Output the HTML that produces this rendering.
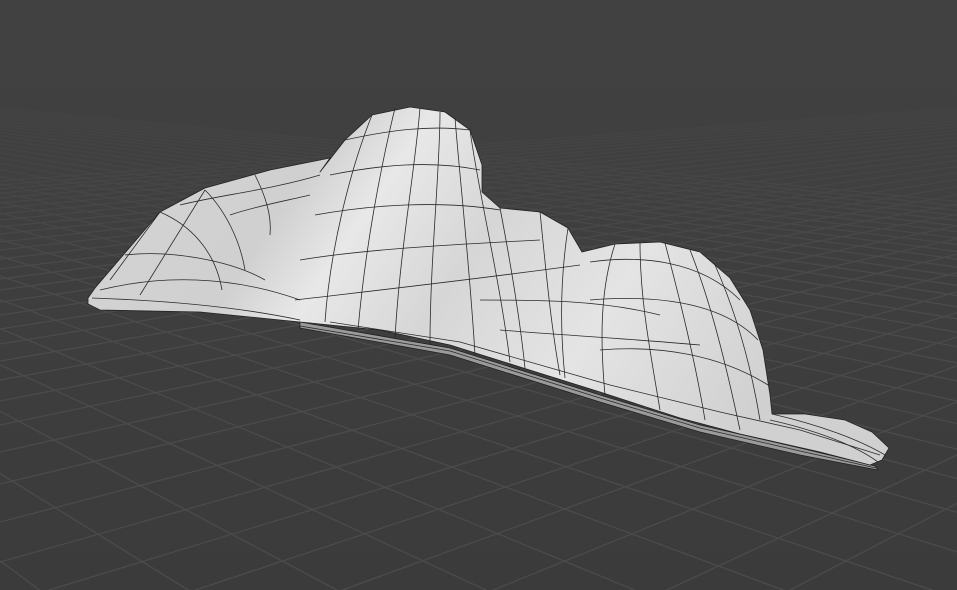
<!DOCTYPE html>
<html><head><meta charset="utf-8"><style>
html,body{margin:0;padding:0;background:#3d3d3d;overflow:hidden;width:957px;height:590px}
svg{display:block;position:absolute;left:0;top:0}
</style></head><body>
<svg width="957" height="590" viewBox="0 0 957 590" xmlns="http://www.w3.org/2000/svg">
<defs>
<linearGradient id="bg" x1="0" y1="0" x2="0" y2="1">
<stop offset="0" stop-color="#414141"/><stop offset="1" stop-color="#3b3b3b"/>
</linearGradient>
<linearGradient id="fade" x1="0" y1="0" x2="0" y2="1">
<stop offset="0" stop-color="#414141" stop-opacity="1"/>
<stop offset="0.1" stop-color="#414141" stop-opacity="1"/>
<stop offset="0.3" stop-color="#404040" stop-opacity="0.5"/>
<stop offset="0.5" stop-color="#404040" stop-opacity="0"/>
</linearGradient>
<linearGradient id="body" x1="0" y1="0" x2="1" y2="0.3">
<stop offset="0" stop-color="#d4d4d4"/><stop offset="0.3" stop-color="#d0d0d0"/><stop offset="0.4" stop-color="#e8e8e8"/>
<stop offset="0.55" stop-color="#d6d6d6"/><stop offset="0.75" stop-color="#e4e4e4"/><stop offset="1" stop-color="#d0d0d0"/>
</linearGradient>
</defs>
<rect width="957" height="590" fill="url(#bg)"/>
<g stroke="#4b4b4b" stroke-width="1.3" fill="none">
<path d="M-673,60L120,650M-668,60L285,650M-662,60L450,650M-657,60L615,650M-652,60L780,650M-646,60L945,650M-641,60L1110,650M-635,60L1275,650M-630,60L1440,650M-625,60L1605,650M-619,60L1770,650M-614,60L1935,650M-608,60L2100,650M-603,60L2265,650M-597,60L2430,650M-592,60L2595,650M-587,60L2760,650M-581,60L2925,650M-576,60L3090,650M-570,60L3255,650M-565,60L3420,650M-560,60L3585,650M-554,60L3750,650M-549,60L3915,650M-543,60L4080,650M-538,60L4245,650M-533,60L4410,650M-527,60L4575,650M-522,60L4740,650M-516,60L4905,650M-511,60L5070,650M-506,60L5235,650M-500,60L5400,650M-495,60L5565,650"/>
<path d="M0,790L1850,40M0,715L1850,40M0,655L1850,40M0,605L1850,40M0,562L1850,40M0,522L1850,40M0,484L1850,40M0,452L1850,40M0,425L1850,40M0,401L1850,40M0,380L1850,40M0,361L1850,40M0,344L1850,40M0,329L1850,40M0,315L1850,40M0,302L1850,40M0,290L1850,40M0,279L1850,40M0,269L1850,40M0,259L1850,40M0,250L1850,40M0,242L1850,40M0,234L1850,40M0,227L1850,40M0,220L1850,40M0,214L1850,40M0,208L1850,40M0,203L1850,40M0,198L1850,40M0,193L1850,40M0,189L1850,40M0,185L1850,40M0,181L1850,40M0,900L1850,40M0,1000L1850,40"/>
</g>
<rect width="957" height="590" fill="url(#fade)"/>
<g stroke="#222" stroke-width="0.8" stroke-linejoin="round">
<path d="M300,322 L450,348 L600,395 L700,425 L800,448 L875,466 L878,470 L800,455 L700,432 L600,402 L450,355 L300,328 Z" fill="#9a9a9a"/>
<path fill="url(#body)" d="M88,298 L95,288 L160,212 L205,188 L270,170 L330,158 L320,172 L345,140 L372,115 L410,107 L445,112 L470,130 L482,165 L482,192 L500,208 L540,212 L568,228 L582,252 L615,244 L660,242 L700,252 L730,278 L750,310 L763,350 L770,395 L772,414 L805,414 L845,420 L872,432 L889,448 L882,460 L870,465 L820,452 L740,434 L680,418 L600,392 L520,367 L450,345 L380,330 L300,322 L200,312 L100,310 L88,304 Z"/>
</g>
<g stroke="#2a2a2a" stroke-width="0.8" fill="none">
<path d="M92,298 C150,300 230,305 300,320"/>
<path d="M100,290 C160,275 230,275 300,300"/>
<path d="M125,255 C170,250 230,260 265,280"/>
<path d="M160,212 C190,225 215,250 222,290"/>
<path d="M205,190 C225,210 240,240 245,270"/>
<path d="M255,175 C265,195 272,215 270,235"/>
<path d="M180,205 C220,195 270,190 320,175"/>
<path d="M230,215 C260,205 290,200 310,195"/>
<path d="M110,280 L160,212"/>
<path d="M140,295 L205,190"/>
<path d="M372,115 C350,170 330,250 325,322"/>
<path d="M395,108 C380,170 365,250 358,330"/>
<path d="M420,108 C415,170 400,250 395,338"/>
<path d="M440,112 C440,170 430,260 430,345"/>
<path d="M455,118 C460,180 470,270 475,355"/>
<path d="M470,130 C478,190 500,280 510,362"/>
<path d="M345,140 C390,130 430,125 470,130"/>
<path d="M330,175 C380,165 430,160 480,170"/>
<path d="M315,215 C370,205 440,200 500,210"/>
<path d="M300,260 C360,250 440,245 540,240"/>
<path d="M295,300 C380,290 470,280 580,265"/>
<path d="M500,208 C510,260 520,320 525,368"/>
<path d="M540,212 C545,260 550,320 560,375"/>
<path d="M568,228 C560,280 560,330 565,378"/>
<path d="M480,300 C540,300 600,300 660,315"/>
<path d="M500,330 C560,335 620,338 700,345"/>
<path d="M615,244 C600,290 600,340 605,395"/>
<path d="M640,242 C640,300 650,350 660,410"/>
<path d="M665,243 C680,300 695,360 705,420"/>
<path d="M690,250 C710,300 725,360 740,430"/>
<path d="M715,265 C735,310 750,360 760,420"/>
<path d="M590,262 C640,255 700,260 740,300"/>
<path d="M590,300 C650,295 720,300 758,340"/>
<path d="M600,350 C660,345 720,355 768,385"/>
<path d="M300,326 L450,351 L600,398 L700,428 L800,451 L876,468"/>
<path d="M330,322 L460,342 L610,385 L720,412 L800,430 L880,455"/>
<path d="M772,414 C820,425 860,440 885,455"/>
<path d="M770,420 C815,430 855,445 878,462"/>
</g>
</svg>
</body></html>
